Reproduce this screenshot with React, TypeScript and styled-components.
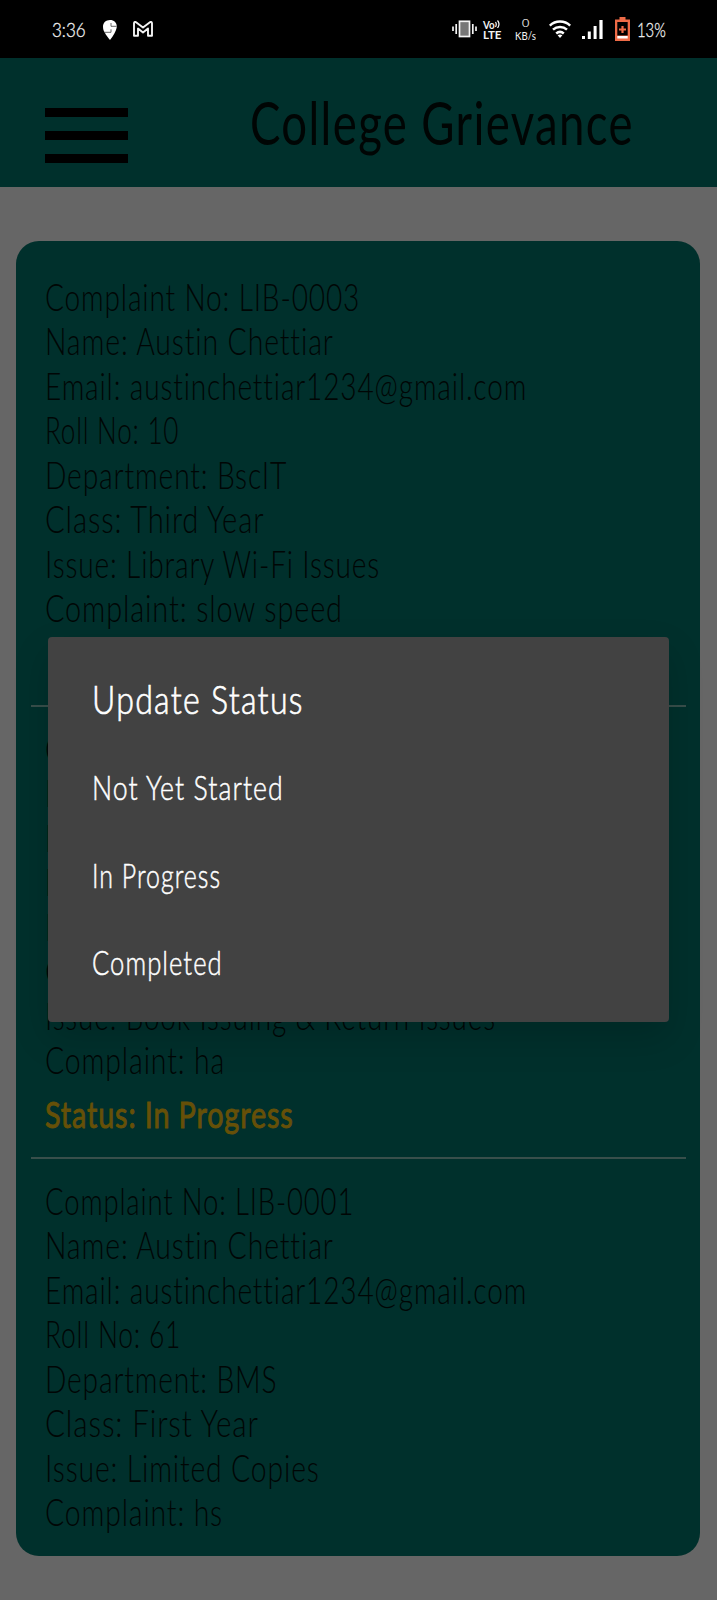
import React, { useLayoutEffect, useRef, useState } from "react";
import styled, { createGlobalStyle } from "styled-components";

const Global = createGlobalStyle`
  * { box-sizing: border-box; }
  html, body { margin: 0; padding: 0; background: #666666; }
  body {
    font-family: Lato, "Liberation Sans", sans-serif;
    font-variant-ligatures: none;
  }
`;

const Screen = styled.div`
  position: relative;
  display: flex;
  flex-direction: column;
  width: 717px;
  height: 1600px;
  overflow: hidden;
  background: #666666;
`;

const StatusBar = styled.header`
  display: flex;
  justify-content: space-between;
  align-items: center;
  height: 58px;
  padding: 0 51px 0 52px;
  background: #000;
  color: #f2f2f2;
`;

const Cluster = styled.div`
  display: flex;
  align-items: center;
  height: 58px;
`;

const Slot = styled.div<{ $gap?: number; $drop?: number }>`
  display: flex;
  flex-direction: column;
  margin-left: ${(p) => p.$gap ?? 0}px;
  padding-top: ${(p) => p.$drop ?? 0}px;
`;

const StatusText = styled.span<{ $size: number; $line: number; $weight?: number; $stroke?: number }>`
  font-size: ${(p) => p.$size}px;
  line-height: ${(p) => p.$line}px;
  font-weight: ${(p) => p.$weight ?? 400};
  -webkit-text-stroke: ${(p) => p.$stroke ?? 0}px currentColor;
  text-align: center;
`;

const AppBar = styled.div`
  display: flex;
  justify-content: space-between;
  height: 129px;
  padding: 0 83px 0 45px;
  background: #00302c;
`;

const Burger = styled.div`
  display: flex;
  flex-direction: column;
  justify-content: space-between;
  width: 82.5px;
  height: 55px;
  margin-top: 50px;
`;

const Bar = styled.span`
  height: 9px;
  background: #000;
`;

const Title = styled.h1`
  margin: 28px 0 0;
  color: #000504;
  font-size: 60px;
  line-height: 72px;
  font-weight: 400;
  letter-spacing: 0.03em;
`;

const Card = styled.main`
  margin: 53.5px 17px 0 16px;
  height: 1315.5px;
  padding-top: 34px;
  border-radius: 23px;
  background: #00302c;
`;

const Complaint = styled.section`
  padding-left: 28.5px;
`;

const Row = styled.div`
  height: 44.5px;
  line-height: 44.5px;
  font-size: 37px;
  font-weight: 300;
  letter-spacing: 0.03em;
  color: #000605;
`;

const StatusRow = styled(Row)`
  margin: 9.5px 0 20.5px;
  font-weight: 400;
  -webkit-text-stroke: 1px currentColor;
  color: #665008;
`;

const Divider = styled.hr`
  height: 2px;
  margin: 0 14px 19.5px 15px;
  border: 0;
  background: #384f4b;
`;

const Overlay = styled.div`
  position: absolute;
  inset: 0;
  display: flex;
  align-items: flex-start;
  padding: 637px 48px 0;
`;

const Dialog = styled.div`
  width: 621px;
  height: 384.5px;
  padding: 38px 44px 0 43.5px;
  border-radius: 4px;
  background: #424242;
  box-shadow: 0 16px 36px rgba(0, 0, 0, 0.16);
  color: #fff;
`;

const DialogTitle = styled.h2`
  margin: 0;
  font-size: 39.5px;
  line-height: 48px;
  font-weight: 300;
  letter-spacing: 0.04em;
  -webkit-text-stroke: 0.7px currentColor;
`;

const Option = styled.div`
  height: 87.5px;
  line-height: 87.5px;
  font-size: 32.5px;
  font-weight: 300;
  letter-spacing: 0.04em;
  -webkit-text-stroke: 0.5px currentColor;
`;

const OptionList = styled.div`
  padding-top: 21px;
`;

const FitBox = styled.span<{ $width: number }>`
  display: block;
  width: ${(p) => p.$width}px;
`;

const FitInner = styled.span`
  display: inline-block;
  white-space: nowrap;
  transform-origin: 0 50%;
`;

/* Condenses one line of text so that it fills exactly `width` pixels. */
function Fit({ width, children }: { width: number; children: string }) {
  const ref = useRef<HTMLSpanElement>(null);
  const [scale, setScale] = useState(1);
  useLayoutEffect(() => {
    if (ref.current) setScale(width / ref.current.offsetWidth);
  }, [width, children]);
  return (
    <FitBox $width={width}>
      <FitInner ref={ref} style={{ transform: `scaleX(${scale})` }}>
        {children}
      </FitInner>
    </FitBox>
  );
}

type Line = [text: string, width: number];

const complaints: { lines: Line[]; status?: Line; last?: boolean }[] = [
  {
    lines: [
      ["Complaint No: LIB-0003", 315],
      ["Name: Austin Chettiar", 289],
      ["Email: austinchettiar1234@gmail.com", 482],
      ["Roll No: 10", 134],
      ["Department: BscIT", 242],
      ["Class: Third Year", 219],
      ["Issue: Library Wi-Fi Issues", 335],
      ["Complaint: slow speed", 298],
    ],
  },
  {
    lines: [
      ["Complaint No:", 183],
      ["Name:", 82],
      ["Email:", 75],
      ["Roll No:", 98],
      ["Department:", 164],
      ["Class:", 78],
      ["Issue: Book Issuing & Return Issues", 451],
      ["Complaint: ha", 180],
    ],
    status: ["Status: In Progress", 249],
  },
  {
    lines: [
      ["Complaint No: LIB-0001", 309],
      ["Name: Austin Chettiar", 289],
      ["Email: austinchettiar1234@gmail.com", 482],
      ["Roll No: 61", 136],
      ["Department: BMS", 232],
      ["Class: First Year", 214],
      ["Issue: Limited Copies", 275],
      ["Complaint: hs", 178],
    ],
    last: true,
  },
];

const PinIcon = () => (
  <svg width="14" height="20" viewBox="0 0 14 20">
    <path d="M7 0C3 0 0 2.800 0 6.500C0 9 .6 10.600 1.500 12C3 15.500 5.500 18 7 20C10.500 15.500 13 11 13.600 8C14.500 3.500 11.500 0 7 0Z" fill="#fff" />
    <path d="M8 3V6.300H13.600M1.500 12.300H8V9.300" stroke="#555" strokeWidth=".9" fill="none" />
  </svg>
);

const MailIcon = () => (
  <svg width="20" height="16" viewBox="0 0 20 16" fill="none" stroke="#f4f4f4" strokeWidth="1.900" strokeLinejoin="round">
    <path d="M1 14.800V2.300C1 .8 2.400 .6 3.400 1.400L10 6.600L16.600 1.400C17.600 .6 19 .8 19 2.300V14.800H15V7.500L10 11.500L5 7.500V14.800Z" />
  </svg>
);

const VibrateIcon = () => (
  <svg width="25" height="18" viewBox="0 0 25 18" stroke="#f4f4f4" fill="none" strokeWidth="1.700">
    <rect x="7.500" y="1.300" width="10" height="15.200" fill="#777" />
    <path d="M1 6.500V11M4.200 4V14M20.800 4V14M24 6.500V11" />
  </svg>
);

const WifiIcon = () => (
  <svg width="22" height="19" viewBox="0 0 22 19" stroke="#fff" fill="none" strokeWidth="2.500">
    <path d="M.8 5.600C6.500 .2 15.500 .2 21.200 5.600M4 9.700C8 6 14 6 18 9.700M7.200 13.500C9.500 11.500 12.500 11.500 14.800 13.500" />
    <path d="M8.600 15.200Q11 13.600 13.400 15.200L11 18Z" fill="#fff" stroke="none" />
  </svg>
);

const SignalIcon = () => (
  <svg width="21" height="19" viewBox="0 0 21 19" fill="#fff">
    <path d="M0 16h3v3H0ZM5.800 11.500h3v7.500H5.800ZM11.600 6h3v13h-3ZM17.400 0h3.200v19h-3.200Z" />
  </svg>
);

const BatteryIcon = () => (
  <svg width="15" height="24" viewBox="0 0 15 24">
    <path d="M4.500 0h6v2.500H15V24H0V2.500h4.500Z" fill="#ee6b47" />
    <path d="M2.300 5h10.400v13.500H2.300Z" fill="#000" />
    <path d="M2.300 19h10.400v2.500H2.300Z" fill="#fff" />
    <path d="M7.500 9v7M4 12.500h7" stroke="#ee6b47" strokeWidth="2.200" />
  </svg>
);

const VoWaves = () => (
  <svg width="6" height="8" viewBox="0 0 6 8" stroke="#fff" fill="none" strokeWidth="1.200">
    <path d="M.5 2Q2 4 .5 7M2.500 .5Q5.500 4 2.500 8" />
  </svg>
);

const VoLine = styled.div`
  display: flex;
  align-items: flex-start;
  height: 9px;
`;

export default function App() {
  return (
    <>
      <Global />
      <Screen>
        <StatusBar>
          <Cluster>
            <Slot>
              <StatusText $size={20.5} $line={24} $weight={300} $stroke={0.3}>
                <Fit width={34}>3:36</Fit>
              </StatusText>
            </Slot>
            <Slot $gap={17} $drop={1}><PinIcon /></Slot>
            <Slot $gap={16}><MailIcon /></Slot>
          </Cluster>
          <Cluster>
            <Slot><VibrateIcon /></Slot>
            <Slot $gap={6} $drop={2}>
              <VoLine>
                <StatusText $size={11.5} $line={9} $weight={700}><Fit width={12}>Vo</Fit></StatusText>
                <VoWaves />
              </VoLine>
              <StatusText $size={11.5} $line={11} $weight={700}><Fit width={18}>LTE</Fit></StatusText>
            </Slot>
            <Slot $gap={14}>
              <StatusText $size={12.5} $line={13} $weight={300} $stroke={0.2}>0</StatusText>
              <StatusText $size={12} $line={14}><Fit width={21}>KB/s</Fit></StatusText>
            </Slot>
            <Slot $gap={13}><WifiIcon /></Slot>
            <Slot $gap={11}><SignalIcon /></Slot>
            <Slot $gap={12}><BatteryIcon /></Slot>
            <Slot $gap={7}>
              <StatusText $size={20.5} $line={24} $weight={300} $stroke={0.3}>
                <Fit width={29}>13%</Fit>
              </StatusText>
            </Slot>
          </Cluster>
        </StatusBar>
        <AppBar>
          <Burger>
            <Bar />
            <Bar />
            <Bar />
          </Burger>
          <Title>
            <Fit width={384}>College Grievance</Fit>
          </Title>
        </AppBar>
        <Card>
          {complaints.map((c, i) => (
            <React.Fragment key={i}>
              <Complaint>
                {c.lines.map(([text, width], j) => (
                  <Row key={j}>
                    <Fit width={width}>{text}</Fit>
                  </Row>
                ))}
                {!c.last && (
                  <StatusRow>{c.status && <Fit width={c.status[1]}>{c.status[0]}</Fit>}</StatusRow>
                )}
              </Complaint>
              {!c.last && <Divider />}
            </React.Fragment>
          ))}
        </Card>
        <Overlay>
          <Dialog role="dialog">
            <DialogTitle>
              <Fit width={212}>Update Status</Fit>
            </DialogTitle>
            <OptionList>
              <Option><Fit width={192}>Not Yet Started</Fit></Option>
              <Option><Fit width={129}>In Progress</Fit></Option>
              <Option><Fit width={131}>Completed</Fit></Option>
            </OptionList>
          </Dialog>
        </Overlay>
      </Screen>
    </>
  );
}
